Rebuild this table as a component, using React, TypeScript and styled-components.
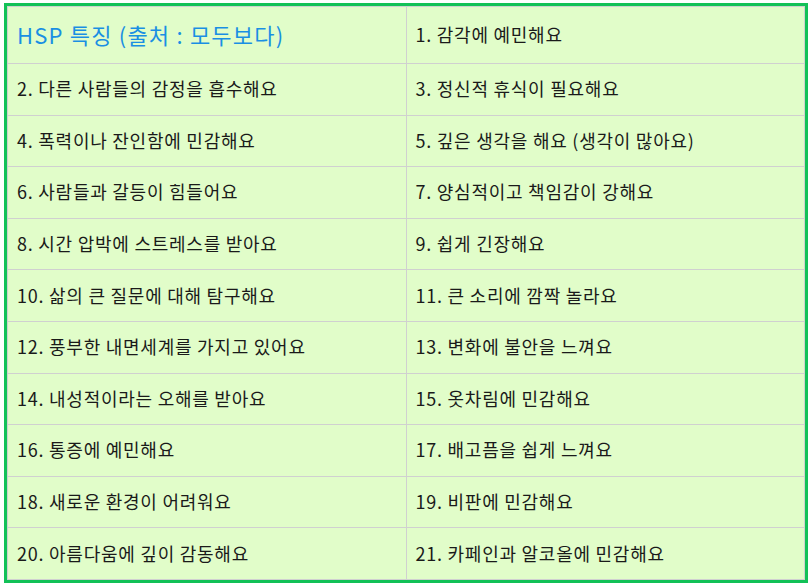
import React from 'react';
import styled, { createGlobalStyle } from 'styled-components';

const GlobalStyle = createGlobalStyle`
    html, body {
        margin: 0;
        padding: 0;
        background: #ffffff;
    }
    body {
        font-family: 'Noto Sans CJK KR', 'Noto Sans', sans-serif;
    }
`;

const Page = styled.div`
    padding: 3px 3px 0 4px;
`;

const Frame = styled.div`
    border: 3px solid #12c157;
    background: #e1fdc9;
`;

const Table = styled.table`
    width: 100%;
    border-collapse: collapse;
    table-layout: fixed;
`;

const Row = styled.tr<{ $head?: boolean }>`
    height: ${(p): string => (p.$head ? '57px' : '51.6px')};
`;

const Cell = styled.td<{ $head?: boolean }>`
    border: 1px solid #d0d0d0;
    padding: 0 0 2px 9px;
    vertical-align: middle;
    font-size: ${(p): string => (p.$head ? '22px' : '18px')};
    color: ${(p): string => (p.$head ? '#1a8fe3' : '#1a1a1a')};
    letter-spacing: ${(p): string => (p.$head ? '1.2px' : '0.75px')};
    white-space: nowrap;
`;

const items: string[] = [
    '1. 감각에 예민해요',
    '2. 다른 사람들의 감정을 흡수해요',
    '3. 정신적 휴식이 필요해요',
    '4. 폭력이나 잔인함에 민감해요',
    '5. 깊은 생각을 해요 (생각이 많아요)',
    '6. 사람들과 갈등이 힘들어요',
    '7. 양심적이고 책임감이 강해요',
    '8. 시간 압박에 스트레스를 받아요',
    '9. 쉽게 긴장해요',
    '10. 삶의 큰 질문에 대해 탐구해요',
    '11. 큰 소리에 깜짝 놀라요',
    '12. 풍부한 내면세계를 가지고 있어요',
    '13. 변화에 불안을 느껴요',
    '14. 내성적이라는 오해를 받아요',
    '15. 옷차림에 민감해요',
    '16. 통증에 예민해요',
    '17. 배고픔을 쉽게 느껴요',
    '18. 새로운 환경이 어려워요',
    '19. 비판에 민감해요',
    '20. 아름다움에 깊이 감동해요',
    '21. 카페인과 알코올에 민감해요'
];

const rows: string[][] = [];
for (let i = 1; i < items.length; i += 2) {
    rows.push([items[i], items[i + 1]]);
}

const App: React.FC = () => (
    <Page>
        <GlobalStyle />
        <Frame>
            <Table>
                <tbody>
                    <Row $head>
                        <Cell $head>HSP 특징 (출처 : 모두보다)</Cell>
                        <Cell>{items[0]}</Cell>
                    </Row>
                    {rows.map((pair) => (
                        <Row key={pair[0]}>
                            <Cell>{pair[0]}</Cell>
                            <Cell>{pair[1]}</Cell>
                        </Row>
                    ))}
                </tbody>
            </Table>
        </Frame>
    </Page>
);

export default App;
